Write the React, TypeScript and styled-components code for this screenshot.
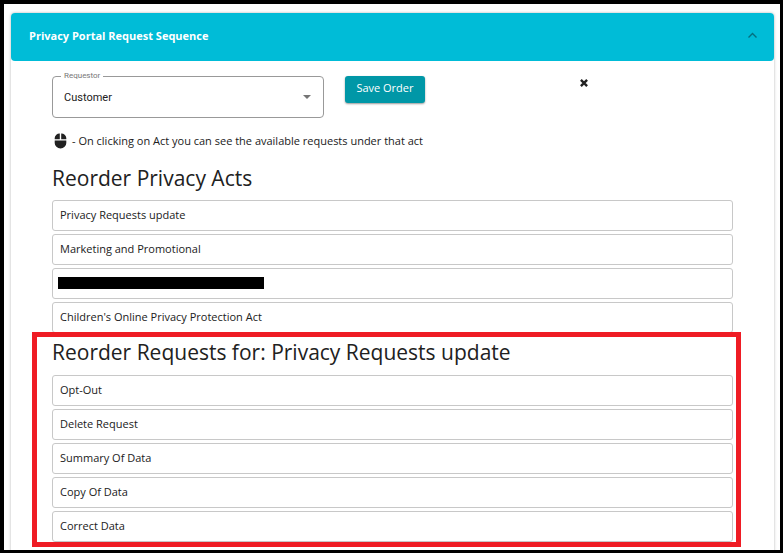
import React, { useState } from "react";
import styled, { createGlobalStyle } from "styled-components";

const GlobalStyle = createGlobalStyle`
  *, *::before, *::after { box-sizing: border-box; }
  body {
    margin: 0;
    background: #fff;
    color: #212121;
    font: 11px/16px "Open Sans", "Noto Sans", sans-serif;
  }
`;

const Frame = styled.div`
  height: 100vh;
  overflow: hidden;
  padding: 9px 6px 0 7px;
  border: solid #000;
  border-width: 4px 3px 3px 4px;
`;

const Card = styled.main`
  min-height: 100%;
  border-radius: 4px;
  background: #fff;
  box-shadow: 0 0 3px rgba(0, 0, 0, 0.3);
`;

const CardHeader = styled.button`
  display: flex;
  align-items: center;
  justify-content: space-between;
  width: 100%;
  height: 48px;
  padding: 0 16px 2px 18px;
  border: 0;
  border-radius: 4px;
  background: #00bcd7;
  color: #fff;
  font: inherit;
  font-weight: 700;
  cursor: pointer;
`;

const Chevron = styled.svg<{ $open: boolean }>`
  width: 11px;
  height: 11px;
  color: #046f7f;
  transform: ${({ $open }) => ($open ? "none" : "rotate(180deg)")};
`;

const CardBody = styled.div`
  padding: 15px 41px;
`;

const Toolbar = styled.div`
  display: grid;
  grid-template-columns: 40% 214px auto;
  align-items: start;
  justify-content: start;
  column-gap: 21px;
`;

const Field = styled.div`
  position: relative;
  display: flex;
  height: 42px;
`;

const FieldLabel = styled.label`
  position: absolute;
  top: -5px;
  left: 9px;
  padding: 0 3px;
  background: #fff;
  color: #777;
  font: 8px/10px Roboto, sans-serif;
`;

const Select = styled.select`
  appearance: none;
  width: 100%;
  padding: 2px 28px 0 11px;
  border: 1px solid #999;
  border-radius: 4px;
  background: transparent;
  color: #212121;
  font: 11px/16px Roboto, sans-serif;
`;

const SelectArrow = styled.svg`
  position: absolute;
  top: 19px;
  right: 13px;
  width: 8px;
  height: 4px;
  pointer-events: none;
`;

const SaveButton = styled.button`
  justify-self: start;
  height: 27px;
  padding: 0 11px 3px;
  border: 0;
  border-radius: 3px;
  background: #0097a7;
  box-shadow: 0 1px 2px rgba(0, 0, 0, 0.4);
  color: #fff;
  font: inherit;
  cursor: pointer;
`;

const CloseButton = styled.button`
  display: flex;
  margin-top: 3px;
  padding: 0;
  border: 0;
  background: none;
  color: #212121;
  cursor: pointer;
`;

const Hint = styled.p`
  display: flex;
  align-items: center;
  gap: 5px;
  margin: 15px 0 0 2px;
`;

const SectionBlock = styled.section<{ $highlighted?: boolean }>`
  position: relative;
  display: grid;
  row-gap: ${({ $highlighted }) => ($highlighted ? "9px" : "8px")};
  padding-top: ${({ $highlighted }) => ($highlighted ? "5px" : "15px")};

  &::after {
    content: ${({ $highlighted }) => ($highlighted ? '""' : "none")};
    position: absolute;
    inset: -1px -8px -5px -20px;
    border: 5px solid #ef1c24;
    pointer-events: none;
  }
`;

const Heading = styled.h2`
  margin: 0;
  font-size: 21px;
  font-weight: 400;
  line-height: 28px;
`;

const List = styled.ul`
  display: grid;
  gap: 3px;
  margin: 0;
  padding: 0;
  list-style: none;
`;

const Item = styled.li`
  display: flex;
  align-items: center;
  height: 31px;
  padding: 0 5px 2px;
  border: 1px solid #c8c8c8;
  border-radius: 3px;
`;

const ItemText = styled.span`
  padding: 0 2px;
`;

const Redaction = styled.span`
  width: 206px;
  height: 12px;
  background: #000;
`;

type Entry = { id: string; label?: string };

const acts: Entry[] = [
  { id: "update", label: "Privacy Requests update" },
  { id: "marketing", label: "Marketing and Promotional" },
  { id: "redacted" },
  { id: "children", label: "Children's Online Privacy Protection Act" },
];

const requests: Entry[] = [
  { id: "opt-out", label: "Opt-Out" },
  { id: "delete", label: "Delete Request" },
  { id: "summary", label: "Summary Of Data" },
  { id: "copy", label: "Copy Of Data" },
  { id: "correct", label: "Correct Data" },
];

function Section({ title, entries, highlighted }: { title: string; entries: Entry[]; highlighted?: boolean }) {
  return (
    <SectionBlock $highlighted={highlighted}>
      <Heading>{title}</Heading>
      <List>
        {entries.map(({ id, label }) => (
          <Item key={id} draggable>
            {label ? <ItemText>{label}</ItemText> : <Redaction />}
          </Item>
        ))}
      </List>
    </SectionBlock>
  );
}

export default function App() {
  const [open, setOpen] = useState(true);

  return (
    <>
      <GlobalStyle />
      <Frame>
        <Card>
          <CardHeader type="button" aria-expanded={open} onClick={() => setOpen(!open)}>
            Privacy Portal Request Sequence
            <Chevron $open={open} viewBox="0 0 11 11" fill="none" stroke="currentColor" strokeWidth="1.4" aria-hidden="true">
              <path d="M1.5 6.5 5.5 2.5l4 4" />
            </Chevron>
          </CardHeader>
          {open && (
            <CardBody>
              <Toolbar>
                <Field>
                  <FieldLabel htmlFor="requestor">Requestor</FieldLabel>
                  <Select id="requestor" defaultValue="Customer">
                    <option>Customer</option>
                  </Select>
                  <SelectArrow viewBox="0 0 8 4" aria-hidden="true">
                    <path d="M0 0h8L4 4z" fill="#757575" />
                  </SelectArrow>
                </Field>
                <SaveButton type="button">Save Order</SaveButton>
                <CloseButton type="button" aria-label="Close">
                  <svg width="8" height="8" viewBox="0 0 8 8" stroke="currentColor" strokeWidth="2.4" aria-hidden="true">
                    <path d="M.9.9l6.2 6.2M7.1.9.9 7.1" />
                  </svg>
                </CloseButton>
              </Toolbar>
              <Hint>
                <svg width="13" height="16" viewBox="0 0 13 16" fill="#212121" aria-hidden="true">
                  <path d="M5.8.5v5.7H.7V5A4.8 4.8 0 0 1 5.8.5zM7.2.5A4.8 4.8 0 0 1 12.3 5v1.2H7.2zM.7 7.5h11.6v2.4a5.8 5.5 0 0 1-11.6 0z" />
                </svg>
                - On clicking on Act you can see the available requests under that act
              </Hint>
              <Section title="Reorder Privacy Acts" entries={acts} />
              <Section title="Reorder Requests for: Privacy Requests update" entries={requests} highlighted />
            </CardBody>
          )}
        </Card>
      </Frame>
    </>
  );
}
